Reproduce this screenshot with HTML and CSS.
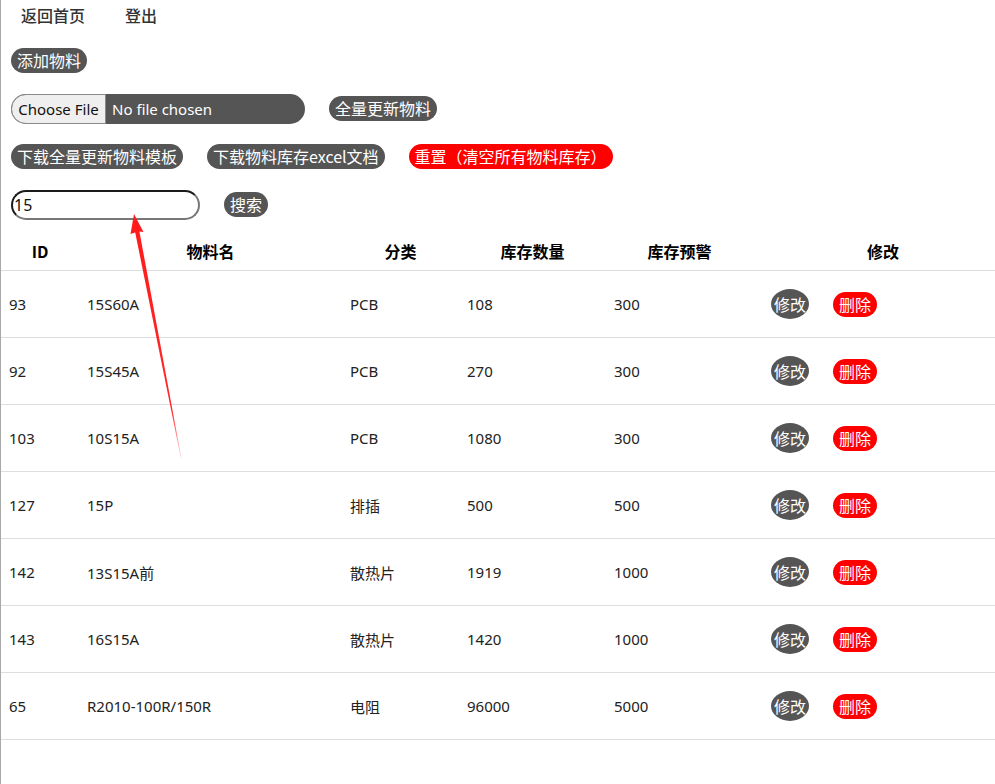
FILE: index.html
```html
<!DOCTYPE html>
<html lang="zh-CN">
<head>
<meta charset="utf-8">
<title>物料库存</title>
<link rel="stylesheet" href="styles.css">
</head>
<body>
<div class="page">
  <nav class="nav">
    <a class="nav-link" href="#">返回首页</a>
    <a class="nav-link" href="#">登出</a>
  </nav>
  <div class="bar"><button class="btn">添加物料</button></div>
  <div class="bar">
    <input class="file-input" type="file">
    <button class="btn">全量更新物料</button>
  </div>
  <div class="bar">
    <button class="btn">下载全量更新物料模板</button>
    <button class="btn">下载物料库存excel文档</button>
    <button class="btn btn-red">重置（清空所有物料库存）</button>
  </div>
  <div class="bar">
    <input class="search" type="text" value="15">
    <button class="btn">搜索</button>
  </div>
  <div class="table-wrap">
    <table class="table">
      <colgroup>
        <col class="c-id"><col class="c-name"><col class="c-cat"><col class="c-qty"><col class="c-warn"><col class="c-op">
      </colgroup>
      <thead>
        <tr><th>ID</th><th>物料名</th><th>分类</th><th>库存数量</th><th>库存预警</th><th>修改</th></tr>
      </thead>
      <tbody>
        <tr><td>93</td><td>15S60A</td><td>PCB</td><td>108</td><td>300</td><td><button class="op-edit">修改</button><button class="op-del">删除</button></td></tr>
        <tr><td>92</td><td>15S45A</td><td>PCB</td><td>270</td><td>300</td><td><button class="op-edit">修改</button><button class="op-del">删除</button></td></tr>
        <tr><td>103</td><td>10S15A</td><td>PCB</td><td>1080</td><td>300</td><td><button class="op-edit">修改</button><button class="op-del">删除</button></td></tr>
        <tr><td>127</td><td>15P</td><td>排插</td><td>500</td><td>500</td><td><button class="op-edit">修改</button><button class="op-del">删除</button></td></tr>
        <tr><td>142</td><td>13S15A前</td><td>散热片</td><td>1919</td><td>1000</td><td><button class="op-edit">修改</button><button class="op-del">删除</button></td></tr>
        <tr><td>143</td><td>16S15A</td><td>散热片</td><td>1420</td><td>1000</td><td><button class="op-edit">修改</button><button class="op-del">删除</button></td></tr>
        <tr><td>65</td><td>R2010-100R/150R</td><td>电阻</td><td>96000</td><td>5000</td><td><button class="op-edit">修改</button><button class="op-del">删除</button></td></tr>
      </tbody>
    </table>
  </div>
  <svg class="annot" width="995" height="784" viewBox="0 0 995 784" aria-hidden="true">
    <defs>
      <linearGradient id="fade" x1="135" y1="215" x2="181" y2="458" gradientUnits="userSpaceOnUse">
        <stop offset="0" stop-color="#ff1a1a"/>
        <stop offset="0.8" stop-color="#ff2a2a"/>
        <stop offset="1" stop-color="#ff2a2a" stop-opacity="0.2"/>
      </linearGradient>
    </defs>
    <polygon fill="url(#fade)" points="134,214 143.5,232 139.4,231.4 181.4,458 180.8,458 135.2,232.4 130.5,234"/>
  </svg>
</div>
</body>
</html>
```

FILE: styles.css
```css
html, body {
  margin: 0;
  padding: 0;
  overflow: hidden;
  background: #fff;
}
body {
  font-family: "Noto Sans", "Noto Sans CJK SC", sans-serif;
  color: #222;
}
.page {
  position: relative;
  min-height: 784px;
  border-left: 1px solid #a8a8a8;
}
.nav {
  display: flex;
  height: 36px;
  align-items: center;
  padding-bottom: 6px;
  box-sizing: border-box;
}
.nav-link {
  padding: 0 20px;
  font-size: 16px;
  font-weight: 500;
  color: #333;
  text-decoration: none;
  font-family: "Noto Sans CJK SC", sans-serif;
}
.bar {
  display: flex;
  align-items: center;
  gap: 24px;
  height: 48px;
  padding-left: 10px;
}
.bar-file {
  padding-top: 1px;
}
.btn {
  height: 25px;
  padding: 0 6px;
  border: none;
  border-radius: 13px;
  background: #555;
  color: #fff;
  font-family: "Noto Sans CJK SC", sans-serif;
  font-size: 16px;
  line-height: 25px;
  cursor: pointer;
}
.btn-red {
  background: #f00;
}
.file-input {
  width: 294px;
  height: 30px;
  margin-top: 2px;
  padding: 0;
  border-radius: 15px;
  background: #555;
  color: #fff;
  font-family: "Noto Sans", "Noto Sans CJK SC", sans-serif;
  font-size: 15px;
  overflow: hidden;
}
.file-input::file-selector-button {
  width: 95px;
  height: 30px;
  margin: 0 6px 0 0;
  padding: 0;
  border: 1px solid #8a8a8a;
  border-radius: 15px 0 0 15px;
  background: #efefef;
  color: #111;
  font: inherit;
}
.search {
  box-sizing: border-box;
  width: 189px;
  height: 30px;
  margin-top: 1px;
  padding: 0 1px;
  border: 2px solid;
  border-color: #1a1a1a #777 #777 #1a1a1a;
  border-radius: 15px;
  font-family: "Noto Sans", sans-serif;
  font-size: 16px;
  color: #111;
  outline: none;
}
.table-wrap {
  margin-top: 3px;
  width: 994px;
  overflow: hidden;
}
.table {
  width: 1012px;
  table-layout: fixed;
  border-collapse: separate;
  border-spacing: 0;
}
.c-id { width: 78px; }
.c-name { width: 263px; }
.c-cat { width: 117px; }
.c-qty { width: 147px; }
.c-warn { width: 147px; }
.c-op { width: 260px; }
.table th {
  height: 39px;
  padding: 0 8px;
  border-bottom: 1px solid #dcdde0;
  font-family: "Noto Sans CJK SC", sans-serif;
  font-size: 16px;
  font-weight: 700;
  color: #000;
  text-align: center;
  vertical-align: middle;
}
.table td {
  height: 66px;
  padding: 0 8px;
  border-bottom: 1px solid #dcdde0;
  font-size: 15px;
  color: #222;
  text-align: left;
  vertical-align: middle;
  white-space: nowrap;
}
.op-edit {
  width: 38px;
  height: 30px;
  margin-left: 10px;
  padding: 0;
  border: none;
  border-radius: 50%;
  background: #555;
  color: #fff;
  font-family: "Noto Sans CJK SC", sans-serif;
  font-size: 16px;
  vertical-align: middle;
}
.op-del {
  width: 44px;
  height: 25px;
  margin-left: 24px;
  padding: 0;
  border: none;
  border-radius: 13px;
  background: #f00;
  color: #fff;
  font-family: "Noto Sans CJK SC", sans-serif;
  font-size: 16px;
  line-height: 25px;
  vertical-align: middle;
}
.annot {
  position: absolute;
  left: -1px;
  top: 0;
  pointer-events: none;
}
```
